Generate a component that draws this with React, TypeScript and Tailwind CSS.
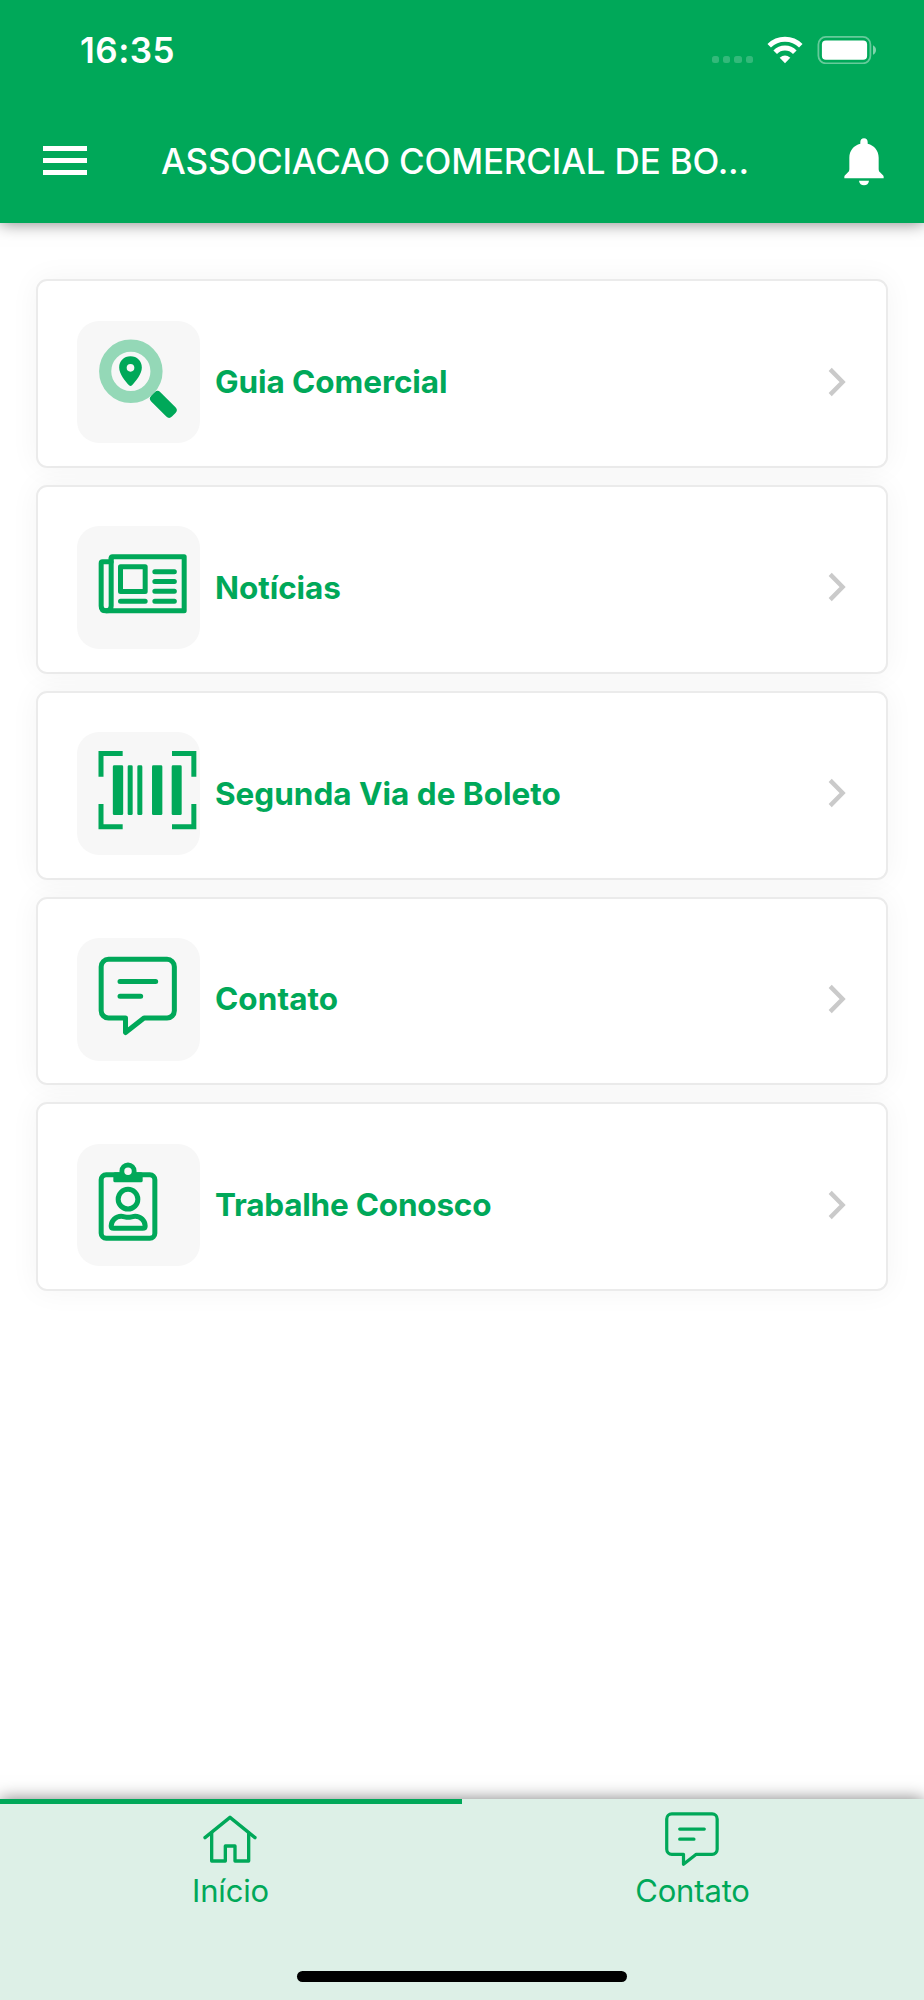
import type { ReactNode } from "react";

const GREEN = "#00a859";

function GuideIcon() {
  return (
    <svg viewBox="0 0 368 368" className="block h-full w-full">
      <circle cx="161.5" cy="151" r="77" fill="none" stroke="#94d8b7" strokeWidth="36.5" />
      <path
        fill={GREEN}
        fillRule="evenodd"
        d="M160.500 106c-19.500 0-34 14.500-34 33.500 0 20 19 42 29.500 53.500 3 3 6 3 9 0 10.500-11.500 29.500-33.500 29.500-53.500 0-19-14.500-33.500-34-33.500zm0 23a11.500 11.500 0 1 1 0 23a11.500 11.500 0 0 1 0-23z"
      />
      <rect x="215" y="230.500" width="88" height="39" rx="12" fill={GREEN} transform="rotate(45 259 250)" />
    </svg>
  );
}

function NewsIcon() {
  return (
    <svg viewBox="0 0 368 368" className="block h-full w-full" fill="none" stroke={GREEN} strokeWidth="15" strokeLinecap="round" strokeLinejoin="round">
      <path d="M102.500 96.500q0-4 4-4H321.500V254.500H87q-14.500 0-14.500-14.500V111.500q0-4 4-4H102.500" />
      <path d="M102.500 96.500V240q0 14.500-14.500 14.500" />
      <path d="M130.500 122.500h74v74h-74z" />
      <path d="M233.500 137h58.500M233.500 166.500h58.500M233.500 196h58.500M233.500 225.500h58.500M130.500 225.500h74" />
    </svg>
  );
}

function BarcodeIcon() {
  return (
    <svg viewBox="0 0 368 368" className="block h-full w-full">
      <path
        d="M137 64.500H72V134M285 64.500H350.500V134M72 216V284.500H137M350.500 216V284.500H285"
        fill="none"
        stroke={GREEN}
        strokeWidth="15"
      />
      <g fill={GREEN}>
        <rect x="107.500" y="100" width="31" height="149" rx="4" />
        <rect x="152" y="100" width="15" height="149" rx="4" />
        <rect x="181" y="100" width="15" height="149" rx="4" />
        <rect x="225" y="100" width="31" height="149" rx="4" />
        <rect x="284" y="100" width="30" height="149" rx="4" />
      </g>
    </svg>
  );
}

function ChatPath() {
  return (
    <>
      <path d="M94.500 64H270a22 22 0 0 1 22 22V218a22 22 0 0 1-22 22H201L145.500 283.500V240H94.500a22 22 0 0 1-22-22V86a22 22 0 0 1 22-22z" />
      <path d="M129 130.500H236M129 174.500H191" />
    </>
  );
}

function ContactIcon() {
  return (
    <svg viewBox="0 0 368 368" className="block h-full w-full" fill="none" stroke={GREEN} strokeWidth="15" strokeLinecap="round" strokeLinejoin="round">
      <ChatPath />
    </svg>
  );
}

function WorkIcon() {
  return (
    <svg viewBox="0 0 368 368" className="block h-full w-full" fill="none" stroke={GREEN} strokeWidth="15">
      <rect x="72.500" y="92.500" width="161" height="190" rx="15" />
      <rect x="109" y="85" width="88" height="30" rx="5" fill={GREEN} stroke="none" />
      <circle cx="153" cy="81.500" r="18.500" fill="#f7f7f7" strokeWidth="14.500" />
      <circle cx="153" cy="165.500" r="29.500" />
      <path d="M110 253H197q7.500 0 7.500-7c0-16-14-29-30-29-8 0-13 3-21 3s-13-3-21-3c-16 0-30 13-30 29q0 7 7.500 7z" />
    </svg>
  );
}

const items: { label: string; icon: ReactNode; tracking: string }[] = [
  { label: "Guia Comercial", icon: <GuideIcon />, tracking: "tracking-[-0.080px]" },
  { label: "Notícias", icon: <NewsIcon />, tracking: "tracking-[-0.060px]" },
  { label: "Segunda Via de Boleto", icon: <BarcodeIcon />, tracking: "tracking-[-0.010px]" },
  { label: "Contato", icon: <ContactIcon />, tracking: "tracking-[0.060px]" },
  { label: "Trabalhe Conosco", icon: <WorkIcon />, tracking: "tracking-[-0.220px]" },
];

function StatusBar() {
  return (
    <div className="flex h-[100px] items-center justify-between pr-[47px] pl-[80px]">
      <span className="text-[35px] leading-[42px] font-semibold tracking-[0.500px]">16:35</span>
      <div className="flex items-center">
        <div className="flex gap-[4px] pt-[19px]">
          {[0, 1, 2, 3].map((n) => (
            <span key={n} className="h-[7px] w-[7.300px] rounded-[2.500px] bg-white/20" />
          ))}
        </div>
        <svg width="36" height="28" viewBox="0 0 36 28" className="ml-[14px]" fill="none" stroke="#fff">
          <path d="M2.200 9.700A22.500 22.500 0 0 1 33.800 9.700" strokeWidth="5" />
          <path d="M8.200 16.200A13.600 13.600 0 0 1 27.800 16.200" strokeWidth="5" />
          <path d="M18 27.200L12.700 21.800Q18 17.200 23.300 21.800z" fill="#fff" stroke="none" />
        </svg>
        <svg width="60" height="28" viewBox="0 0 60 28" className="ml-[14px]">
          <rect x="1.400" y="0.900" width="52" height="26.400" rx="7.500" fill="none" stroke="#fff" strokeOpacity="0.400" strokeWidth="1.800" />
          <rect x="4.900" y="4.500" width="45.200" height="19.200" rx="4" fill="#fff" />
          <path d="M56 9.200q3 1.600 3 4.800t-3 4.800z" fill="#fff" fillOpacity="0.500" />
        </svg>
      </div>
    </div>
  );
}

function Header() {
  return (
    <header className="relative h-[223px] shrink-0 bg-[#00a859] text-white shadow-[0_0_16px_rgba(0,0,0,0.500)]">
      <StatusBar />
      <div className="flex h-[123px] items-start pr-[40px] pl-[43px]">
        <button className="mt-[46px] flex w-[44px] flex-col gap-[7px]" aria-label="Menu">
          <span className="h-[5px] w-full bg-white" />
          <span className="h-[5px] w-full bg-white" />
          <span className="h-[5px] w-full bg-white" />
        </button>
        <h1 className="mt-[40px] ml-[74px] flex-1 text-[35px] leading-[42px] font-[450] tracking-[-0.180px] whitespace-nowrap">
          ASSOCIACAO COMERCIAL DE BO...
        </h1>
        <svg width="40" height="48" viewBox="0 0 120 144" className="mt-[37.500px]" fill="#fff">
          <path d="M60 1C53 1 49 6 49 12V17C29 22 16 38 16 59V92C16 97 15 100 12 103L3 112Q1 114 1 117V121H119V117Q119 114 117 112L108 103C105 100 104 97 104 92V59C104 38 91 22 71 17V12C71 6 67 1 60 1z" />
          <path d="M45 128H75C74 137 68 142 60 142S46 137 45 128z" />
        </svg>
      </div>
    </header>
  );
}

function Card({ label, icon, tracking }: { label: string; icon: ReactNode; tracking: string }) {
  return (
    <li className="flex h-[188.900px] items-center rounded-[11px] border-2 border-[#ebebeb] bg-white pr-[40px] pl-[39.300px] shadow-[0_0_30px_rgba(0,0,0,0.048)]">
      <div className="mt-[16.500px] h-[122.700px] w-[122.700px] shrink-0 rounded-[22px] bg-[#f7f7f7]">{icon}</div>
      <span className={`mt-[17px] ml-[15px] flex-1 text-[31.500px] leading-[40px] font-bold text-[#00a859] ${tracking}`}>
        {label}
      </span>
      <svg width="18" height="30" viewBox="0 0 18 30" className="mt-[16px]" fill="none" stroke="#cacaca" strokeWidth="4.400">
        <path d="M2.200 2.400L14.600 15L2.200 27.600" />
      </svg>
    </li>
  );
}

function TabBar() {
  return (
    <footer className="relative flex h-[201px] shrink-0 flex-col bg-[#ddf0e7] text-[#00a859] shadow-[0_0_16px_rgba(0,0,0,0.500)]">
      <nav className="grid h-[172px] grid-cols-2">
        <a className="flex flex-col items-center border-t-[5px] border-[#00a859]">
          <svg width="54" height="54" viewBox="0 0 162 162" className="mt-[9px] mr-[2px]" fill="none" stroke={GREEN} strokeWidth="10" strokeLinecap="round" strokeLinejoin="round">
            <path d="M6 74L81 13L156 74" />
            <path d="M26 60V144H67V99H96V144H137V60" />
          </svg>
          <span className="mt-[4px] mr-[1px] text-[31px] leading-[40px] tracking-[-0.200px]">Início</span>
        </a>
        <a className="flex flex-col items-center pt-[13px]">
          <svg width="54" height="54" viewBox="65 56 235 235" className="mr-[2px]" fill="none" stroke={GREEN} strokeWidth="14" strokeLinecap="round" strokeLinejoin="round">
            <ChatPath />
          </svg>
          <span className="mt-[5px] mr-[1px] text-[31px] leading-[40px] tracking-[-0.150px]">Contato</span>
        </a>
      </nav>
      <div className="h-[11px] w-[330px] self-center rounded-full bg-black" />
    </footer>
  );
}

export default function App() {
  return (
    <div className="flex h-[2000px] w-[924px] flex-col overflow-hidden bg-white font-[Inter,'Liberation_Sans',sans-serif]">
      <Header />
      <main className="flex-1 px-[36px] pt-[56.200px]">
        <ul className="flex flex-col gap-[16.900px]">
          {items.map((item) => (
            <Card key={item.label} {...item} />
          ))}
        </ul>
      </main>
      <TabBar />
    </div>
  );
}
